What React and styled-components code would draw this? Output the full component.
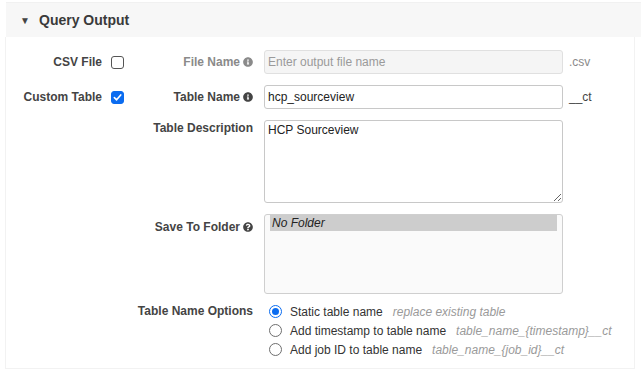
import React from "react";
import styled, { createGlobalStyle } from "styled-components";
import { FaInfoCircle, FaQuestionCircle } from "react-icons/fa";

const Global = createGlobalStyle`
  html, body { margin: 0; padding: 0; background: #fff; }
  body { font-family: "Liberation Sans", Arial, sans-serif; font-size: 12px; color: #444; }
`;

const Panel = styled.section`
  padding-top: 2px;
  padding-left: 5px;
  width: 636px;
`;

const Header = styled.div`
  display: flex;
  align-items: center;
  height: 35px;
  margin-left: 1px;
  margin-right: -6px;
  background: #f7f7f7;
  border-top: 1px solid #f1f1f1;
  padding-left: 14px;
  box-sizing: border-box;
`;

const Caret = styled.span`
  font-size: 10px;
  color: #444;
  width: 19px;
  line-height: 1;
  margin-top: 1px;
`;

const Title = styled.h2`
  margin: 0;
  font-size: 14px;
  font-weight: bold;
  color: #3a3a3a;
`;

const Body = styled.div`
  border: 1px solid #f2f2f2;
  border-top: none;
  width: 630px;
  box-sizing: border-box;
  padding: 13px 0 0 0;
  height: 332px;
`;

const Row = styled.div`
  display: grid;
  grid-template-columns: 96px 22px 129px 310px auto;
  align-items: ${(p) => (p.$top ? "start" : "center")};
  margin-top: ${(p) => p.$mt || 0}px;
`;

const Label = styled.label`
  text-align: right;
  font-weight: bold;
  color: ${(p) => (p.$disabled ? "#8a8a8a" : "#444")};
  line-height: ${(p) => p.$lh || 16}px;
  padding-top: ${(p) => p.$pt || 0}px;
  white-space: nowrap;
  display: flex;
  justify-content: flex-end;
  align-items: center;
  gap: 3px;
  svg { width: 10px; height: 10px; flex-shrink: 0; }
`;

const BoxCell = styled.div`
  padding-left: 9px;
  display: flex;
  align-items: center;
`;

const Check = styled.span`
  width: 13px;
  height: 13px;
  flex-shrink: 0;
  box-sizing: border-box;
  border-radius: 3px;
  border: 1px solid ${(p) => (p.$on ? "#0b6cf0" : "#555")};
  background: ${(p) => (p.$on ? "#0b6cf0" : "#fff")};
  display: flex;
  align-items: center;
  justify-content: center;
`;

const FieldCell = styled.div`
  padding-left: 11px;
  min-width: 0;
`;

const TextInput = styled.input`
  display: block;
  width: 299px;
  height: 24px;
  box-sizing: border-box;
  border: 1px solid ${(p) => (p.disabled ? "#e0e0e0" : "#c8c8c8")};
  border-radius: 3px;
  background: ${(p) => (p.disabled ? "#f5f5f5" : "#fff")};
  padding: 0 3px;
  margin: 0;
  font-family: inherit;
  font-size: 12px;
  color: #222;
  outline: none;
  &::placeholder { color: #9a9a9a; }
`;

const TextArea = styled.textarea`
  display: block;
  width: 299px;
  height: 83px;
  box-sizing: border-box;
  border: 1px solid #c8c8c8;
  border-radius: 3px;
  padding: 2px 3px;
  font-family: inherit;
  font-size: 12px;
  line-height: 14px;
  color: #222;
  outline: none;
  resize: both;
  margin: 0;
`;

const ListBox = styled.div`
  width: 299px;
  height: 80px;
  box-sizing: border-box;
  border: 1px solid #cfcfcf;
  border-radius: 3px;
  background: #fafafa;
  padding: 0 5px 0 5px;
`;

const Option = styled.div`
  background: ${(p) => (p.$selected ? "#cdcdcd" : "transparent")};
  font-style: italic;
  color: #222;
  height: 16px;
  line-height: 16px;
  padding-left: 2px;
`;

const Suffix = styled.span`
  padding-left: 6px;
  color: ${(p) => (p.$muted ? "#8a8a8a" : "#444")};
`;

const Radios = styled.div`
  padding-left: 5px;
  display: flex;
  flex-direction: column;
  width: 400px;
`;

const RadioRow = styled.div`
  display: flex;
  align-items: center;
  height: 19px;
  white-space: nowrap;
  color: #333;
`;

const Radio = styled.span`
  width: 13px;
  height: 13px;
  flex-shrink: 0;
  box-sizing: border-box;
  border-radius: 50%;
  border: 1px solid ${(p) => (p.$on ? "#0b6cf0" : "#6e6e6e")};
  background: #fff;
  margin-right: 8px;
  display: flex;
  align-items: center;
  justify-content: center;
  &::after {
    content: "";
    display: ${(p) => (p.$on ? "block" : "none")};
    width: 7px;
    height: 7px;
    border-radius: 50%;
    background: #0b6cf0;
  }
`;

const Hint = styled.span`
  font-style: italic;
  color: #9a9a9a;
  margin-left: 10px;
`;

const CheckMark = () => (
  <svg width="9" height="9" viewBox="0 0 10 10">
    <path d="M1.5 5.2 L4 7.6 L8.6 2.2" fill="none" stroke="#fff" strokeWidth="1.8" strokeLinecap="round" strokeLinejoin="round" />
  </svg>
);

const options = [
  { label: "Static table name", hint: "replace existing table", on: true },
  { label: "Add timestamp to table name", hint: "table_name_{timestamp}__ct" },
  { label: "Add job ID to table name", hint: "table_name_{job_id}__ct" },
];

export default function App() {
  return (
    <>
      <Global />
      <Panel>
        <Header>
          <Caret>▼</Caret>
          <Title>Query Output</Title>
        </Header>
        <Body>
          <Row>
            <Label>CSV File</Label>
            <BoxCell><Check /></BoxCell>
            <Label $disabled>File Name <FaInfoCircle /></Label>
            <FieldCell><TextInput disabled placeholder="Enter output file name" /></FieldCell>
            <Suffix $muted>.csv</Suffix>
          </Row>
          <Row $mt={11}>
            <Label>Custom Table</Label>
            <BoxCell><Check $on><CheckMark /></Check></BoxCell>
            <Label>Table Name <FaInfoCircle /></Label>
            <FieldCell><TextInput defaultValue="hcp_sourceview" /></FieldCell>
            <Suffix>__ct</Suffix>
          </Row>
          <Row $mt={11} $top>
            <span />
            <span />
            <Label $pt={0} $lh={16}>Table Description</Label>
            <FieldCell><TextArea defaultValue="HCP Sourceview" /></FieldCell>
          </Row>
          <Row $mt={11} $top>
            <span />
            <span />
            <Label $pt={5}>Save To Folder <FaQuestionCircle /></Label>
            <FieldCell>
              <ListBox>
                <Option $selected>No Folder</Option>
              </ListBox>
            </FieldCell>
          </Row>
          <Row $mt={8} $top>
            <span />
            <span />
            <Label $lh={19}>Table Name Options</Label>
            <FieldCell>
              <Radios>
                {options.map((o) => (
                  <RadioRow key={o.label}>
                    <Radio $on={o.on} />
                    {o.label}
                    <Hint>{o.hint}</Hint>
                  </RadioRow>
                ))}
              </Radios>
            </FieldCell>
          </Row>
        </Body>
      </Panel>
    </>
  );
}
